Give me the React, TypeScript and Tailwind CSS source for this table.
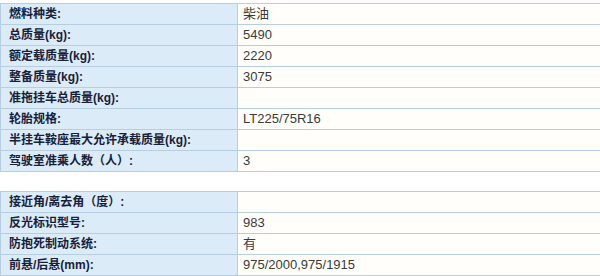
const table1: [string, string][] = [
  ['燃料种类:', '柴油'],
  ['总质量(kg):', '5490'],
  ['额定载质量(kg):', '2220'],
  ['整备质量(kg):', '3075'],
  ['准拖挂车总质量(kg):', ''],
  ['轮胎规格:', 'LT225/75R16'],
  ['半挂车鞍座最大允许承载质量(kg):', ''],
  ['驾驶室准乘人数（人）:', '3'],
]

const table2: [string, string][] = [
  ['接近角/离去角（度）:', ''],
  ['反光标识型号:', '983'],
  ['防抱死制动系统:', '有'],
  ['前悬/后悬(mm):', '975/2000,975/1915'],
]

const font = { fontFamily: '"Liberation Sans", "Noto Sans CJK SC", sans-serif' }

function SpecTable({ rows }: { rows: [string, string][] }) {
  return (
    <div className="border-l border-b border-[#b7cde2] w-[640px]">
      {rows.map(([label, value]) => (
        <div key={label} className="flex h-[21px] border-t border-[#b7cde2]">
          <div className="w-[237px] shrink-0 bg-[#dcebf8] border-r border-[#b7cde2] pl-[8px] flex items-center text-[12px] font-bold text-[#16213a] whitespace-nowrap">
            {label}
          </div>
          <div className="flex-1 bg-[#fffefa] pl-[5px] flex items-center text-[13px] text-[#3a3a3a]">
            {value}
          </div>
        </div>
      ))}
    </div>
  )
}

export default function App() {
  return (
    <div className="w-[600px] h-[276px] overflow-hidden bg-white pt-[3px]" style={font}>
      <SpecTable rows={table1} />
      <div className="h-[19px]" />
      <SpecTable rows={table2} />
    </div>
  )
}
